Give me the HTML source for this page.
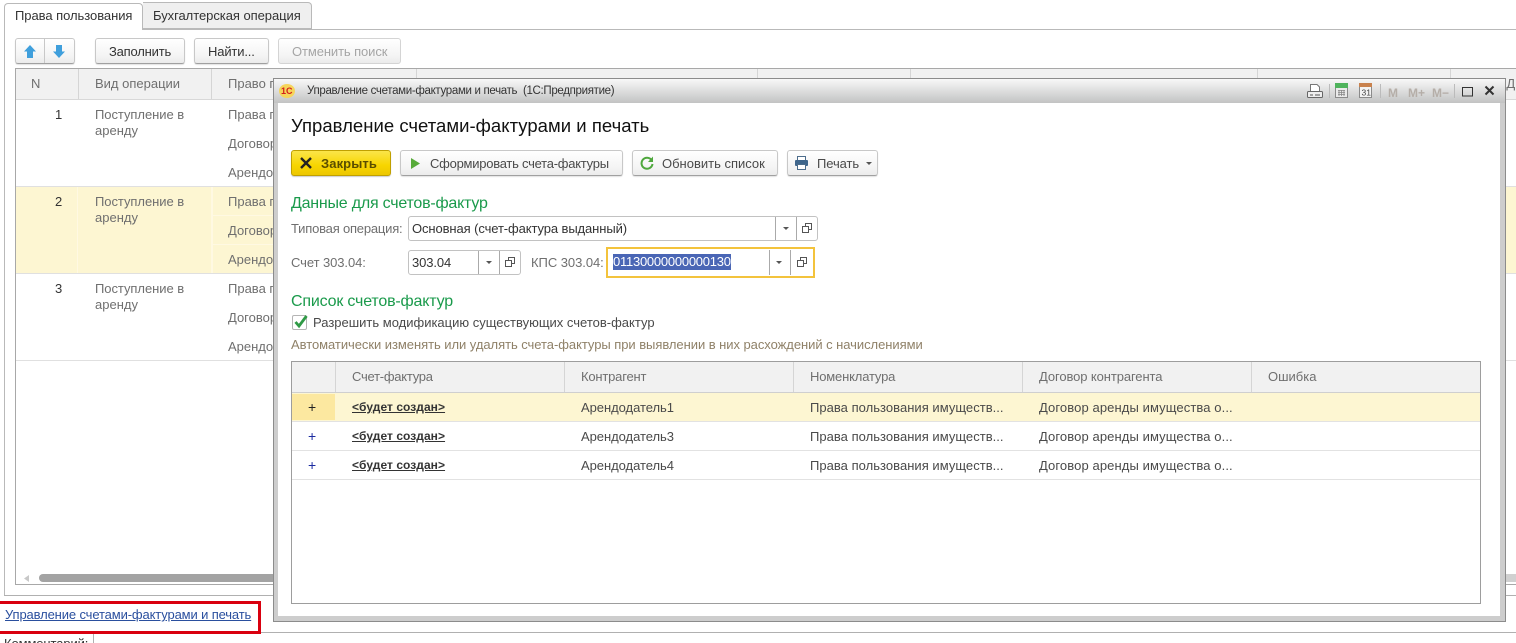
<!DOCTYPE html>
<html lang="ru"><head><meta charset="utf-8"><title>Управление счетами-фактурами и печать</title>
<style>
html,body{margin:0;padding:0;background:#fff}
#p{position:relative;width:1516px;height:643px;overflow:hidden;background:#fff;font:13px "Liberation Sans",Arial,sans-serif;color:#4a4a4a}
#p div,#p span.t{position:absolute}
.t{white-space:nowrap;line-height:14px;letter-spacing:0}
.s{letter-spacing:-.2px!important}
.g{color:#6f6f6f}.d{color:#333}
.btn{box-sizing:border-box;border:1px solid #c8c8c8;border-bottom:1px solid #a0a0a0;border-radius:3px;background:linear-gradient(#fff,#f4f4f4 70%,#ebebeb);box-shadow:0 1px 1px rgba(0,0,0,.12)}
.h{color:#1a9a4b;font-size:16px;line-height:18px;letter-spacing:-.18px}
.f{box-sizing:border-box;border:1px solid #c2c2c2;border-radius:3px;background:#fff}
.ln{background:#aaa;width:1px}
.tri{width:0;height:0;border-left:3px solid transparent;border-right:3px solid transparent;border-top:3px solid #555}
.b{font-weight:bold;font-size:12px;letter-spacing:.05px;color:#333;text-decoration:underline}
.pl{font-size:14px}
</style></head><body><div id="p">

<!-- outer tabs -->
<div style="left:4px;top:29px;width:1512px;height:1px;background:#b9b9b9"></div>
<div style="left:4px;top:29px;width:1px;height:567px;background:#b9b9b9"></div>
<div style="left:4px;top:595px;width:1512px;height:1px;background:#b0b0b0"></div>
<div style="left:4px;top:3px;width:139px;height:27px;box-sizing:border-box;border:1px solid #b9b9b9;border-bottom:0;border-radius:4px 4px 0 0;background:#fff"></div>
<div style="left:143px;top:2px;width:169px;height:27px;box-sizing:border-box;border:1px solid #b9b9b9;border-left:0;border-radius:0 4px 0 0;background:#efefef"></div>
<span class="t d" style="left:15px;top:9px;letter-spacing:-.05px">Права пользования</span>
<span class="t d" style="left:153px;top:9px;letter-spacing:-.05px">Бухгалтерская операция</span>

<!-- toolbar -->
<div class="btn" style="left:15px;top:38px;width:60px;height:26px"></div>
<div style="left:44px;top:39px;width:1px;height:24px;background:#c8c8c8"></div>
<svg style="position:absolute;left:24px;top:45px" width="12" height="13" viewBox="0 0 12 13"><path d="M6 0L12 6.500H9V13H3V6.500H0Z" fill="#3f9fdc"/></svg>
<svg style="position:absolute;left:53px;top:45px" width="12" height="13" viewBox="0 0 12 13"><path d="M6 13L12 6.500H9V0H3V6.500H0Z" fill="#3f9fdc"/></svg>
<div class="btn" style="left:95px;top:38px;width:90px;height:26px"></div>
<span class="t d s" style="left:109px;top:45px">Заполнить</span>
<div class="btn" style="left:194px;top:38px;width:75px;height:26px"></div>
<span class="t d" style="left:208px;top:45px;letter-spacing:-.15px">Найти...</span>
<div class="btn" style="left:278px;top:38px;width:123px;height:26px;box-shadow:none;border-color:#d4d4d4"></div>
<span class="t" style="left:292px;top:45px;color:#a5a5a5;letter-spacing:-.1px">Отменить поиск</span>

<!-- background table -->
<div style="left:15px;top:68px;width:1501px;height:517px;box-sizing:border-box;border:1px solid #a8a8a8;border-right:0"></div>
<div style="left:16px;top:69px;width:1500px;height:30px;background:#f1f1f1"></div>
<div style="left:16px;top:99px;width:1500px;height:1px;background:#d8d8d8"></div>
<div style="left:78px;top:69px;width:1px;height:30px;background:#d5d5d5"></div>
<div style="left:211px;top:69px;width:1px;height:30px;background:#d5d5d5"></div>
<div style="left:416px;top:69px;width:1px;height:30px;background:#d5d5d5"></div>
<div style="left:757px;top:69px;width:1px;height:30px;background:#d5d5d5"></div>
<div style="left:910px;top:69px;width:1px;height:30px;background:#d5d5d5"></div>
<div style="left:1257px;top:69px;width:1px;height:30px;background:#d5d5d5"></div>
<div style="left:1450px;top:69px;width:1px;height:30px;background:#d5d5d5"></div>
<span class="t g" style="left:31px;top:77px">N</span>
<span class="t g" style="left:95px;top:77px">Вид операции</span>
<span class="t g" style="left:228px;top:77px">Право п</span>
<span class="t g" style="left:1497px;top:77px">НД</span>

<div style="left:16px;top:186px;width:1500px;height:1px;background:#e0e0e0"></div>
<div style="left:16px;top:187px;width:1500px;height:86px;background:#fdf6d2"></div>
<div style="left:16px;top:273px;width:1500px;height:1px;background:#e0e0e0"></div>
<div style="left:16px;top:360px;width:1500px;height:1px;background:#e0e0e0"></div>
<div style="left:77px;top:187px;width:1px;height:86px;background:#fff9e2"></div>
<div style="left:211px;top:187px;width:2px;height:86px;background:#fff9e2"></div>
<div style="left:213px;top:215px;width:60px;height:1px;background:#fff9e2"></div>
<div style="left:213px;top:244px;width:60px;height:1px;background:#fff9e2"></div>

<span class="t d" style="left:55px;top:108px">1</span>
<span class="t g" style="left:95px;top:108px;letter-spacing:-.05px">Поступление в</span>
<span class="t g" style="left:95px;top:124px">аренду</span>
<span class="t g" style="left:228px;top:108px">Права п</span>
<span class="t g" style="left:228px;top:137px">Договор</span>
<span class="t g" style="left:228px;top:166px">Арендо</span>

<span class="t d" style="left:55px;top:195px">2</span>
<span class="t g" style="left:95px;top:195px;letter-spacing:-.05px">Поступление в</span>
<span class="t g" style="left:95px;top:211px">аренду</span>
<span class="t g" style="left:228px;top:195px">Права п</span>
<span class="t g" style="left:228px;top:224px">Договор</span>
<span class="t g" style="left:228px;top:253px">Арендо</span>

<span class="t d" style="left:55px;top:282px">3</span>
<span class="t g" style="left:95px;top:282px;letter-spacing:-.05px">Поступление в</span>
<span class="t g" style="left:95px;top:298px">аренду</span>
<span class="t g" style="left:228px;top:282px">Права п</span>
<span class="t g" style="left:228px;top:311px">Договор</span>
<span class="t g" style="left:228px;top:340px">Арендо</span>

<!-- scrollbar -->
<svg style="position:absolute;left:24px;top:575px" width="6" height="7"><path d="M5 0V7L0 3.500Z" fill="#c8c8c8"/></svg>
<div style="left:39px;top:574px;width:240px;height:8px;border-radius:4px;background:#a3a3a3"></div>
<div style="left:1506px;top:574px;width:10px;height:8px;background:#d0d0d0"></div>

<!-- bottom link -->
<div style="left:-4px;top:601px;width:265px;height:33px;box-sizing:border-box;border:3px solid #d9000f"></div>
<span class="t" style="left:5px;top:608px;color:#2a4f9e;text-decoration:underline;letter-spacing:-.13px">Управление счетами-фактурами и печать</span>
<div style="left:261px;top:632px;width:1255px;height:1px;background:#b0b0b0"></div>
<div style="left:93px;top:634px;width:1px;height:9px;background:#b0b0b0"></div>
<span class="t d" style="left:4px;top:637px;letter-spacing:-.1px">Комментарий:</span>

<!-- modal -->
<div style="left:273px;top:78px;width:1233px;height:544px;box-sizing:border-box;border:1px solid #8c8c8c;background:#cdcdcd"></div>
<div style="left:274px;top:79px;width:1231px;height:24px;background:linear-gradient(#f8f8f8,#c2c3c3)"></div>
<div style="left:278px;top:103px;width:1222px;height:513px;background:#fff"></div>
<svg style="position:absolute;left:279px;top:84px" width="16" height="14" viewBox="0 0 16 14"><ellipse cx="8" cy="7" rx="8" ry="7" fill="#f6d55b"/><text x="2" y="10" font-family="Liberation Sans" font-size="9" font-weight="bold" fill="#d3201b">1С</text></svg>
<span class="t" style="left:307px;top:84px;font-size:11.500px;letter-spacing:-.32px;color:#333">Управление счетами-фактурами и печать&nbsp; (1С:Предприятие)</span>

<!-- title bar icons -->
<svg style="position:absolute;left:1306px;top:83px" width="200" height="17" viewBox="0 0 200 17">
<path d="M4.500 9V1.500H11L13.500 4V9" fill="#fff" stroke="#777"/>
<rect x="1.500" y="8.500" width="15" height="6" rx="1" fill="#eee" stroke="#666"/>
<path d="M4 12H7M9 12H14" stroke="#555"/>
<path d="M23.500 1V15" stroke="#bbb"/>
<rect x="29.500" y=".5" width="12" height="14" fill="#eaeaea" stroke="#8a8a8a"/><rect x="29" y="0" width="13" height="5" fill="#4fb35c"/>
<path d="M32 7.500H39M32 9.500H39M32 11.500H39M33 7V13M35.500 7V13M38 7V13" stroke="#888" stroke-width=".8"/>
<rect x="53.500" y="1.500" width="12" height="13" fill="#f4f4f4" stroke="#8a8a8a"/><rect x="53" y="0" width="13" height="4" fill="#c9824e"/>
<text x="55.500" y="12.500" font-family="Liberation Sans" font-size="8.500" fill="#444">31</text>
<path d="M74.500 1V15" stroke="#bbb"/>
<text x="82" y="14" font-family="Liberation Sans" font-size="12" font-weight="bold" fill="#b5aea8">M</text>
<text x="102" y="14" font-family="Liberation Sans" font-size="12" font-weight="bold" fill="#b5aea8">M+</text>
<text x="126" y="14" font-family="Liberation Sans" font-size="12" font-weight="bold" fill="#b5aea8">M−</text>
<path d="M148.500 1V15" stroke="#bbb"/>
<rect x="156.500" y="4.500" width="10" height="8.500" fill="none" stroke="#333"/>
<path d="M179.500 3.500L187.500 11.500M187.500 3.500L179.500 11.500" stroke="#333" stroke-width="2"/>
</svg>

<span class="t" style="left:291px;top:115px;font-size:18.500px;line-height:21px;letter-spacing:.03px;color:#111">Управление счетами-фактурами и печать</span>

<!-- modal buttons -->
<div style="left:291px;top:150px;width:100px;height:26px;box-sizing:border-box;border:1px solid #c0a000;border-radius:3px;background:linear-gradient(#fbe54a,#f7d500 60%,#edc700);box-shadow:0 1px 1px rgba(0,0,0,.2)"></div>
<svg style="position:absolute;left:300px;top:157px" width="12" height="12"><path d="M1 1L11 11M11 1L1 11" stroke="#222" stroke-width="2.400"/></svg>
<span class="t" style="left:321px;top:157px;font-weight:bold;color:#5a4d00;letter-spacing:.1px">Закрыть</span>
<div class="btn" style="left:400px;top:150px;width:223px;height:26px"></div>
<svg style="position:absolute;left:411px;top:158px" width="10" height="11"><path d="M0 0L9 5.500L0 11Z" fill="#58ab3a"/></svg>
<span class="t" style="left:430px;top:157px;letter-spacing:-.25px">Сформировать счета-фактуры</span>
<div class="btn" style="left:632px;top:150px;width:146px;height:26px"></div>
<svg style="position:absolute;left:640px;top:156px" width="14" height="14" viewBox="0 0 14 14"><path d="M11.500 4A5.500 5.500 0 1 0 12.500 8" fill="none" stroke="#4fa83d" stroke-width="2"/><path d="M13 .5V6H8Z" fill="#4fa83d"/></svg>
<span class="t" style="left:662px;top:157px">Обновить список</span>
<div class="btn" style="left:787px;top:150px;width:91px;height:26px"></div>
<svg style="position:absolute;left:794px;top:156px" width="15" height="14" viewBox="0 0 15 14"><rect x="3.500" y=".5" width="8" height="4" fill="#fff" stroke="#4d6d8c"/><rect x="1" y="4" width="13" height="6" rx="1" fill="#3f668c"/><rect x="3.500" y="8.500" width="8" height="5" fill="#fff" stroke="#4d6d8c"/></svg>
<span class="t" style="left:817px;top:157px;letter-spacing:-.1px">Печать</span>
<div class="tri" style="left:866px;top:162px"></div>

<!-- section 1 -->
<span class="t h" style="left:291px;top:195px;letter-spacing:-.22px">Данные для счетов-фактур</span>
<span class="t g s" style="left:291px;top:222px">Типовая операция:</span>
<div class="f" style="left:408px;top:216px;width:410px;height:25px"></div>
<span class="t d" style="left:412px;top:222px;letter-spacing:-.1px">Основная (счет-фактура выданный)</span>
<div class="ln" style="left:775px;top:217px;height:23px"></div>
<div class="ln" style="left:796px;top:217px;height:23px"></div>
<div class="tri" style="left:783px;top:227px"></div>
<svg style="position:absolute;left:802px;top:223px" width="10" height="10"><path d="M3.500 .5H9.500V6.500H6.500V3.500H3.500ZM.5 3.500H6.500V9.500H.5Z" fill="#fff" stroke="#555"/></svg>

<span class="t g" style="left:291px;top:256px;letter-spacing:-.08px">Счет 303.04:</span>
<div class="f" style="left:408px;top:250px;width:113px;height:25px"></div>
<span class="t d" style="left:412px;top:256px;letter-spacing:-.1px">303.04</span>
<div class="ln" style="left:478px;top:251px;height:23px"></div>
<div class="ln" style="left:499px;top:251px;height:23px"></div>
<div class="tri" style="left:486px;top:261px"></div>
<svg style="position:absolute;left:505px;top:257px" width="10" height="10"><path d="M3.500 .5H9.500V6.500H6.500V3.500H3.500ZM.5 3.500H6.500V9.500H.5Z" fill="#fff" stroke="#555"/></svg>

<span class="t g" style="left:531px;top:256px;letter-spacing:-.05px">КПС 303.04:</span>
<div style="left:606px;top:247px;width:209px;height:31px;box-sizing:border-box;border:2px solid #f3c33c;background:#fff"></div>
<div style="left:613px;top:254px;width:118px;height:16px;background:#4a66b5"></div>
<span class="t" style="left:613px;top:255px;color:#fff;letter-spacing:-.25px">01130000000000130</span>
<div class="ln" style="left:769px;top:250px;height:25px"></div>
<div class="ln" style="left:790px;top:250px;height:25px"></div>
<div class="tri" style="left:776px;top:261px"></div>
<svg style="position:absolute;left:797px;top:257px" width="10" height="10"><path d="M3.500 .5H9.500V6.500H6.500V3.500H3.500ZM.5 3.500H6.500V9.500H.5Z" fill="#fff" stroke="#555"/></svg>

<!-- section 2 -->
<span class="t h" style="left:291px;top:293px">Список счетов-фактур</span>
<div style="left:292px;top:315px;width:15px;height:15px;box-sizing:border-box;border:1px solid #b5b5b5;border-radius:2px;background:#fff"></div>
<svg style="position:absolute;left:293px;top:314px" width="16" height="15" viewBox="0 0 16 15"><path d="M2.500 8L6 12L13.500 2" fill="none" stroke="#2f9a46" stroke-width="2.800"/></svg>
<span class="t" style="left:313px;top:316px">Разрешить модификацию существующих счетов-фактур</span>
<span class="t" style="left:291px;top:338px;color:#8f8168;letter-spacing:-.05px">Автоматически изменять или удалять счета-фактуры при выявлении в них расхождений с начислениями</span>

<!-- inner table -->
<div style="left:291px;top:361px;width:1190px;height:243px;box-sizing:border-box;border:1px solid #9d9d9d"></div>
<div style="left:292px;top:362px;width:1188px;height:30px;background:#f1f1f1"></div>
<div style="left:292px;top:392px;width:1188px;height:1px;background:#cfcfcf"></div>
<div style="left:335px;top:362px;width:1px;height:30px;background:#d5d5d5"></div>
<div style="left:564px;top:362px;width:1px;height:30px;background:#d5d5d5"></div>
<div style="left:793px;top:362px;width:1px;height:30px;background:#d5d5d5"></div>
<div style="left:1022px;top:362px;width:1px;height:30px;background:#d5d5d5"></div>
<div style="left:1251px;top:362px;width:1px;height:30px;background:#d5d5d5"></div>
<span class="t g" style="left:352px;top:370px;letter-spacing:-.25px">Счет-фактура</span>
<span class="t g s" style="left:581px;top:370px">Контрагент</span>
<span class="t g" style="left:810px;top:370px;letter-spacing:-.17px">Номенклатура</span>
<span class="t g" style="left:1039px;top:370px;letter-spacing:-.1px">Договор контрагента</span>
<span class="t g" style="left:1268px;top:370px">Ошибка</span>

<div style="left:292px;top:393px;width:1188px;height:28px;background:#fdf6d2"></div>
<div style="left:292px;top:394px;width:43px;height:26px;background:#fce8a0"></div>
<div style="left:292px;top:421px;width:1188px;height:1px;background:#e2e2e2"></div>
<div style="left:292px;top:450px;width:1188px;height:1px;background:#e2e2e2"></div>
<div style="left:292px;top:479px;width:1188px;height:1px;background:#e2e2e2"></div>

<span class="t pl" style="left:308px;top:400px;color:#222">+</span>
<span class="t pl" style="left:308px;top:429px;color:#1a2aa0">+</span>
<span class="t pl" style="left:308px;top:458px;color:#1a2aa0">+</span>
<span class="t b" style="left:352px;top:400px">&lt;будет создан&gt;</span>
<span class="t b" style="left:352px;top:429px">&lt;будет создан&gt;</span>
<span class="t b" style="left:352px;top:458px">&lt;будет создан&gt;</span>
<span class="t" style="left:581px;top:401px;letter-spacing:-.05px">Арендодатель1</span>
<span class="t" style="left:581px;top:430px;letter-spacing:-.05px">Арендодатель3</span>
<span class="t" style="left:581px;top:459px;letter-spacing:-.05px">Арендодатель4</span>
<span class="t" style="left:810px;top:401px;letter-spacing:.03px">Права пользования имуществ...</span>
<span class="t" style="left:810px;top:430px;letter-spacing:.03px">Права пользования имуществ...</span>
<span class="t" style="left:810px;top:459px;letter-spacing:.03px">Права пользования имуществ...</span>
<span class="t" style="left:1039px;top:401px;letter-spacing:.1px">Договор аренды имущества о...</span>
<span class="t" style="left:1039px;top:430px;letter-spacing:.1px">Договор аренды имущества о...</span>
<span class="t" style="left:1039px;top:459px;letter-spacing:.1px">Договор аренды имущества о...</span>

</div></body></html>
